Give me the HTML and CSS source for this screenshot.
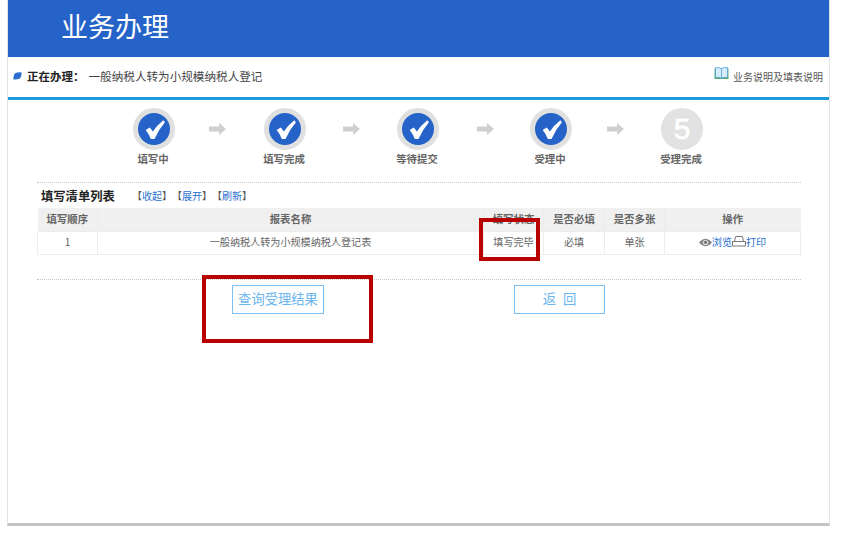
FILE: index.html
```html
<!DOCTYPE html>
<html lang="zh-CN">
<head>
<meta charset="utf-8">
<title>业务办理</title>
<link rel="stylesheet" href="styles.css">
</head>
<body>
<div class="page">
  <header class="banner"><h1>业务办理</h1></header>
  <div class="doing">
    <div class="doing-left">
      <svg class="marker" width="9" height="8" viewBox="0 0 9 8"><path d="M2 1.2Q5 -.2 8.6 .4Q8.6 5 6.4 6.8Q3 8 .4 7.4Q0 3.4 2 1.2Z" fill="#2a6fd0"/></svg>
      <b>正在办理：</b><span>一般纳税人转为小规模纳税人登记</span>
    </div>
    <div class="doing-right">
      <svg width="15" height="13" viewBox="0 0 15 13"><path d="M.5 1.5V12H14.5V1.5" fill="#5fae6a"/><path d="M1.5 .8Q5 -.2 7.5 1.6Q10 -.2 13.5 .8V10.6Q10 9.8 7.5 11.2Q5 9.8 1.5 10.6Z" fill="#d6ecfb" stroke="#4a9fd6" stroke-width=".8"/><path d="M7.5 1.6V11.2" stroke="#4a9fd6" stroke-width=".8"/></svg>
      <span>业务说明及填表说明</span>
    </div>
  </div>
  <div class="steps">
    <div class="step"><span class="circle"><svg class="tick" viewBox="0 0 24 24"><path d="M3.5 12.5L7.5 10L10.5 14Q14 8 20.5 3L22 5Q16 12 12 21H8.5Q6.5 16 3.5 12.5Z" fill="#fff"/></svg></span><span class="label">填写中</span></div>
    <svg class="arrow a1" width="17" height="12" viewBox="0 0 17 12"><path d="M0 3.5H10V0L17 6L10 12V8.5H0Z" fill="#cfcfcf"/></svg>
    <div class="step"><span class="circle"><svg class="tick" viewBox="0 0 24 24"><path d="M3.5 12.5L7.5 10L10.5 14Q14 8 20.5 3L22 5Q16 12 12 21H8.5Q6.5 16 3.5 12.5Z" fill="#fff"/></svg></span><span class="label">填写完成</span></div>
    <svg class="arrow a2" width="17" height="12" viewBox="0 0 17 12"><path d="M0 3.5H10V0L17 6L10 12V8.5H0Z" fill="#cfcfcf"/></svg>
    <div class="step"><span class="circle"><svg class="tick" viewBox="0 0 24 24"><path d="M3.5 12.5L7.5 10L10.5 14Q14 8 20.5 3L22 5Q16 12 12 21H8.5Q6.5 16 3.5 12.5Z" fill="#fff"/></svg></span><span class="label">等待提交</span></div>
    <svg class="arrow a3" width="17" height="12" viewBox="0 0 17 12"><path d="M0 3.5H10V0L17 6L10 12V8.5H0Z" fill="#cfcfcf"/></svg>
    <div class="step"><span class="circle"><svg class="tick" viewBox="0 0 24 24"><path d="M3.5 12.5L7.5 10L10.5 14Q14 8 20.5 3L22 5Q16 12 12 21H8.5Q6.5 16 3.5 12.5Z" fill="#fff"/></svg></span><span class="label">受理中</span></div>
    <svg class="arrow a4" width="17" height="12" viewBox="0 0 17 12"><path d="M0 3.5H10V0L17 6L10 12V8.5H0Z" fill="#cfcfcf"/></svg>
    <div class="step"><span class="circle pending">5</span><span class="label">受理完成</span></div>
  </div>
  <section class="list">
    <div class="list-head">
      <h2>填写清单列表</h2>
      <div class="tools">【<a>收起</a>】【<a>展开</a>】【<a>刷新</a>】</div>
    </div>
    <table>
      <colgroup><col class="c1"><col><col class="c3"><col class="c4"><col class="c5"><col class="c6"></colgroup>
      <thead>
        <tr><th>填写顺序</th><th>报表名称</th><th>填写状态</th><th>是否必填</th><th>是否多张</th><th>操作</th></tr>
      </thead>
      <tbody>
        <tr>
          <td>1</td>
          <td>一般纳税人转为小规模纳税人登记表</td>
          <td class="status">填写完毕</td>
          <td>必填</td>
          <td>单张</td>
          <td class="ops">
            <svg width="13" height="9" viewBox="0 0 13 9"><path d="M0 4.5Q6.5 -3 13 4.5Q6.5 12 0 4.5Z" fill="#888"/><circle cx="6.5" cy="4.5" r="2.6" fill="#ddd"/><circle cx="6.5" cy="4.5" r="1.4" fill="#666"/></svg><a>浏览</a><svg width="14" height="11" viewBox="0 0 14 11"><path d="M2.5 5.5L3.5 .5H10.5L11.5 5.5" fill="#fff" stroke="#777"/><path d="M.5 5.5H13.5V10H.5Z" fill="#fff" stroke="#777"/></svg><a>打印</a>
          </td>
        </tr>
      </tbody>
    </table>
    <div class="actions">
      <button type="button" class="btn">查询受理结果</button>
      <button type="button" class="btn back">返 回</button>
    </div>
  </section>
  <div class="mark mark-status"></div>
  <div class="mark mark-query"></div>
</div>
</body>
</html>
```
FILE: styles.css
```css
* { box-sizing: border-box; }
html, body { margin: 0; padding: 0; background: #fff; }
body { font-family: "Noto Sans CJK SC", "Liberation Sans", sans-serif; font-size: 10px; color: #666; text-spacing-trim: space-all; }
.page {
  position: relative;
  width: 823px;
  height: 526px;
  margin-left: 7px;
  border-left: 1px solid #e2e2e2;
  border-right: 1px solid #e2e2e2;
  border-bottom: 3px solid #c4c4c4;
}
.banner { height: 57px; background: #2563c8; padding-left: 53px; }
.banner h1 { margin: 0; font-size: 27px; line-height: 52px; font-weight: 400; color: #fff; }
.doing {
  height: 43px;
  padding: 0 6px 3px 5px;
  display: flex;
  align-items: center;
  justify-content: space-between;
  border-bottom: 3px solid #1c9ade;
}
.doing-left { display: flex; align-items: center; font-size: 11.6px; color: #444; }
.doing-left b { color: #222; margin: 0 4px 0 5px; font-size: 11.5px; }
.marker { display: block; }
.doing-right { display: flex; align-items: center; gap: 4px; font-size: 10px; color: #555; padding-top: 2px; }
.doing-right svg { margin-top: -6px; }
.steps {
  display: grid;
  grid-template-columns: 60px 25px 17px 29px 60px 28px 17px 28px 60px 29px 17px 27px 60px 26px 17px 28px 60px;
  grid-auto-flow: column;
  padding: 8px 0 0 116px;
  height: 82px;
}
.step { display: flex; flex-direction: column; align-items: center; }
.arrow { margin-top: 15px; }
.arrow.a1 { grid-column: 2 / span 3; margin-left: 25px; }
.arrow.a2 { grid-column: 6 / span 3; margin-left: 28px; }
.arrow.a3 { grid-column: 10 / span 3; margin-left: 29px; }
.arrow.a4 { grid-column: 14 / span 3; margin-left: 26px; }
.circle {
  width: 42px;
  height: 42px;
  border-radius: 50%;
  background: #2563c8;
  border: 5px solid #e0e0e0;
  display: flex;
  align-items: center;
  justify-content: center;
}
.tick { width: 25px; height: 25px; }
.circle.pending {
  background: #e2e2e2;
  border-color: #e2e2e2;
  color: #fff;
  font: 400 30px/1 "Liberation Sans", sans-serif;
  -webkit-text-stroke: .6px #fff;
}
.label { margin: 1px 2px 0 0; font-size: 10.4px; line-height: 15px; font-weight: 700; color: #666; white-space: nowrap; }
.list { margin: 0 28px 0 29px; border-top: 1px dotted #c8c8c8; }
.list-head { height: 25px; display: flex; align-items: center; padding-left: 4px; }
.list-head h2 { margin: 0; width: 91px; font-size: 12.3px; font-weight: 700; color: #222; }
.tools { font-size: 10px; color: #555; white-space: nowrap; padding-bottom: 1px; }
.tools a, .ops a { color: #1f6fd0; }
table { width: 764px; border-collapse: collapse; table-layout: fixed; }
.c1 { width: 60px; }
.c3 { width: 60px; }
.c4 { width: 61px; }
.c5 { width: 60px; }
.c6 { width: 136px; }
th, td {
  padding: 0 0 2px;
  text-align: center;
  font-size: 10.1px;
  color: #666;
  border-right: 1px solid #ececec;
  border-bottom: 1px solid #ececec;
}
th:last-child, td:last-child { border-right: 0; }
th { height: 23px; background: #f0f0f0; font-size: 10.4px; font-weight: 700; }
td { height: 23px; }
td:first-child { border-left: 1px solid #ececec; }
tr td:last-child { border-right: 1px solid #ececec; }
.ops svg { vertical-align: -1px; }
.actions {
  margin-top: 24px;
  padding: 5px 0 0 195px;
  border-top: 1px dotted #c8c8c8;
  display: flex;
  gap: 190px;
}
.btn {
  width: 92px;
  height: 29px;
  padding: 0 0 1px;
  background: #fff;
  border: 1px solid #7cc0f4;
  color: #6cb6ef;
  font: 13.3px "Noto Sans CJK SC", sans-serif;
}
.btn.back { width: 91px; word-spacing: 4px; }
.mark { position: absolute; border: 4px solid #b80000; }
.mark-status { left: 471px; top: 218px; width: 61px; height: 43px; }
.mark-query { left: 194px; top: 275px; width: 171px; height: 68px; }
```
